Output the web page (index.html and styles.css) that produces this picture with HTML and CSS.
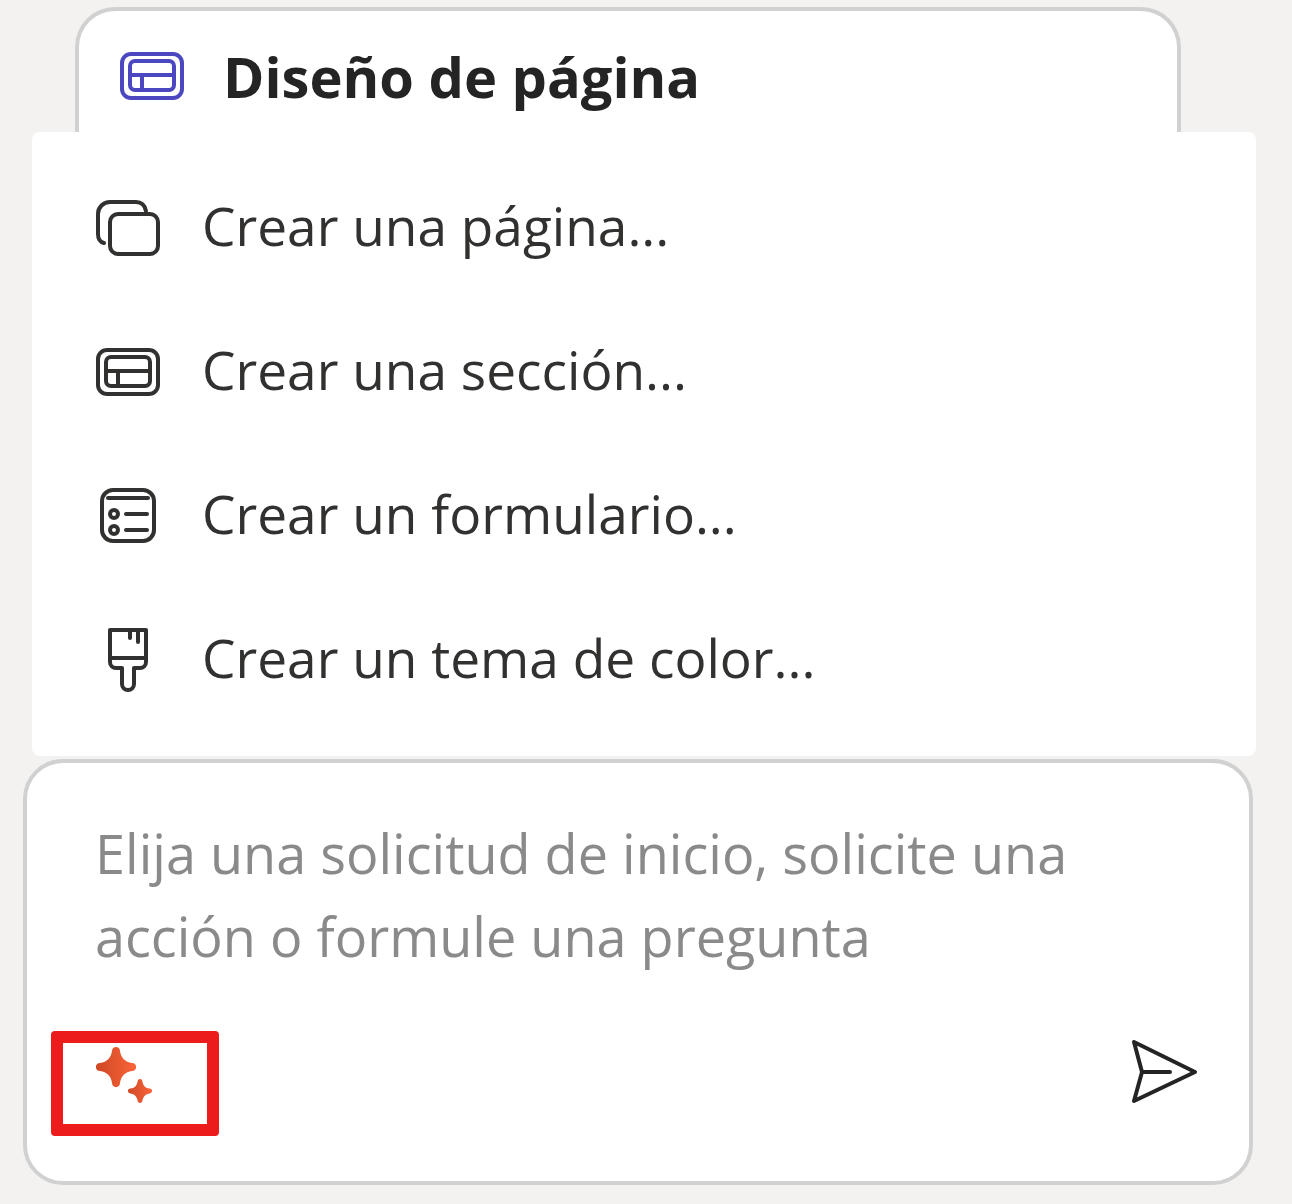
FILE: index.html
```html
<!DOCTYPE html>
<html lang="es">
<head>
    <meta charset="UTF-8">
    <title>Diseño de página</title>
    <link rel="stylesheet" href="styles.css">
</head>
<body>
<div class="tab">
    <svg class="tab-icon" width="64" height="48" viewBox="0 0 64 48">
        <rect x="2" y="2" width="60" height="44" rx="9"/>
        <rect x="10" y="9" width="44" height="29" rx="5"/>
        <path d="M10 23H54M22 23V38"/>
    </svg>
    <h1>Diseño de página</h1>
</div>
<div class="panel">
    <div class="row">
        <span class="row-icon">
            <svg width="64" height="56" viewBox="0 0 64 56">
                <rect x="14" y="14" width="48" height="40" rx="8"/>
                <path d="M50 11C49 6 46 2 40 2H14A12 12 0 0 0 2 14V34C2 39 4 42 8 43"/>
            </svg>
        </span>
        <span class="row-label">Crear una página...</span>
    </div>
    <div class="row">
        <span class="row-icon">
            <svg width="64" height="48" viewBox="0 0 64 48">
                <rect x="2" y="2" width="60" height="44" rx="9"/>
                <rect x="10" y="9" width="44" height="29" rx="5"/>
                <path d="M10 23H54M22 23V38"/>
            </svg>
        </span>
        <span class="row-label">Crear una sección...</span>
    </div>
    <div class="row">
        <span class="row-icon">
            <svg width="56" height="56" viewBox="0 0 56 56">
                <rect x="2" y="2" width="52" height="51" rx="11"/>
                <path d="M8 10H48M26 26H47M26 42H47"/>
                <circle cx="14" cy="26" r="4"/>
                <circle cx="14" cy="42" r="4"/>
            </svg>
        </span>
        <span class="row-label">Crear un formulario...</span>
    </div>
    <div class="row">
        <span class="row-icon">
            <svg width="44" height="68" viewBox="0 0 44 68">
                <path d="M4 4H40V36A6 6 0 0 1 34 42H28V58A6 6 0 0 1 16 58V42H10A6 6 0 0 1 4 36Z"/>
                <path d="M4 32H40M24 4V12M32 4V16"/>
            </svg>
        </span>
        <span class="row-label">Crear un tema de color...</span>
    </div>
</div>
<div class="composer">
    <p class="placeholder">Elija una solicitud de inicio, solicite una acción o formule una pregunta</p>
    <div class="composer-footer">
        <svg class="sparkle" width="60" height="60" viewBox="0 0 60 60">
            <defs>
                <linearGradient id="spark">
                    <stop offset="0" stop-color="#cd4925"/>
                    <stop offset="1" stop-color="#fb643a"/>
                </linearGradient>
            </defs>
            <path transform="translate(21 21)" fill="url(#spark)" d="M-4 -16C-4 -21.5 4 -21.5 4 -16C5 -9 9 -5 16 -4C21.5 -4 21.5 4 16 4C9 5 5 9 4 16C4 21.5 -4 21.5 -4 16C-5 9 -9 5 -16 4C-21.5 4 -21.5 -4 -16 -4C-9 -5 -5 -9 -4 -16Z"/>
            <path transform="translate(45 45) scale(.6)" fill="url(#spark)" d="M-4 -16C-4 -21.5 4 -21.5 4 -16C5 -9 9 -5 16 -4C21.5 -4 21.5 4 16 4C9 5 5 9 4 16C4 21.5 -4 21.5 -4 16C-5 9 -9 5 -16 4C-21.5 4 -21.5 -4 -16 -4C-9 -5 -5 -9 -4 -16Z"/>
        </svg>
        <svg class="send" width="68" height="68" viewBox="0 0 68 68">
            <path d="M3 4L64 34L3 63L11 34ZM11 34H39"/>
        </svg>
    </div>
    <div class="highlight"></div>
</div>
</body>
</html>
```

FILE: styles.css
```css
body {
    margin: 0;
    padding-top: 7px;
    background-color: #f3f2f1;
    font-family: "Open Sans", "Noto Sans", sans-serif;
}

svg {
    display: block;
    fill: none;
    stroke: #323130;
    stroke-width: 4;
    stroke-linecap: round;
    stroke-linejoin: round;
}

.tab {
    box-sizing: border-box;
    display: flex;
    align-items: center;
    gap: 39px;
    width: 1106px;
    height: 125px;
    margin-left: 75px;
    padding: 9px 0 0 41px;
    background-color: #ffffff;
    border: 4px solid #d1d1d1;
    border-bottom: none;
    border-radius: 40px 40px 0 0;
}

.tab-icon {
    stroke: #4b47c0;
}

h1 {
    margin: 0;
    font-size: 56px;
    font-weight: 700;
    color: #242424;
}

.panel {
    box-sizing: border-box;
    width: 1224px;
    height: 624px;
    margin-left: 32px;
    padding: 24px 0;
    background-color: #ffffff;
    border-radius: 8px;
}

.row {
    display: flex;
    align-items: center;
    height: 144px;
    padding-left: 64px;
    font-size: 53.2px;
    color: #323130;
}

.row-icon {
    display: flex;
    justify-content: center;
    width: 64px;
    margin-right: 42px;
}

.row-label {
    margin-bottom: 6px;
}

.composer {
    box-sizing: border-box;
    position: relative;
    width: 1230px;
    height: 426px;
    margin: 3px 0 0 23px;
    padding: 49px 50px 0 68px;
    background-color: #ffffff;
    border: 4px solid #d1d1d1;
    border-radius: 40px;
}

.placeholder {
    margin: 0;
    width: 1020px;
    font-size: 54px;
    line-height: 83px;
    color: #8a8a8a;
}

.composer-footer {
    display: flex;
    justify-content: space-between;
    align-items: flex-end;
    margin-top: 60px;
}

.sparkle {
    stroke: none;
}

.send {
    stroke: #242424;
}

.highlight {
    position: absolute;
    left: 24px;
    top: 268px;
    width: 144px;
    height: 81px;
    border: 12px solid #ed1c1c;
    border-radius: 4px;
}
```
